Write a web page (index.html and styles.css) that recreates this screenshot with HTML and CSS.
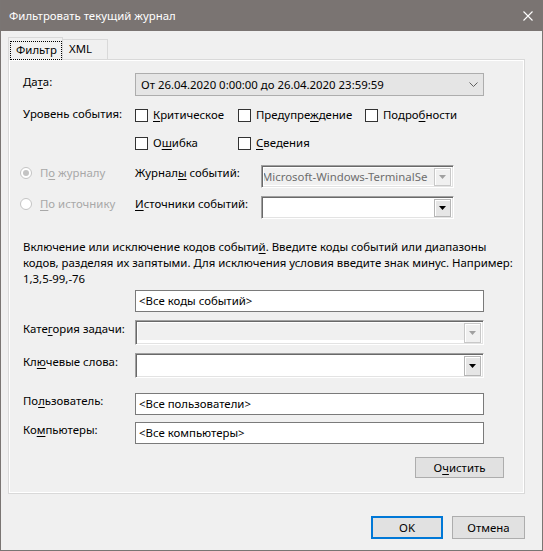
FILE: index.html
```html
<!DOCTYPE html>
<html lang="ru">
<head>
<meta charset="utf-8">
<title>Фильтровать текущий журнал</title>
<link rel="stylesheet" href="styles.css">
</head>
<body>
<div class="window">
  <div class="titlebar">
    <span class="title">Фильтровать текущий журнал</span>
    <svg class="close" width="10" height="10" viewBox="0 0 10 10"><path d="M0.5 0.5 L9.5 9.5 M9.5 0.5 L0.5 9.5" stroke="#fff" stroke-width="1.1" fill="none"/></svg>
  </div>
  <div class="content">
    <div class="tabs">
      <div class="tab tab-active"><span class="focus">Фильтр</span></div>
      <div class="tab tab-plain">XML</div>
    </div>
    <div class="panel">
      <div class="row row-date">
        <div class="label">Да<u>т</u>а:</div>
        <div class="datecombo">
          <span>От 26.04.2020 0:00:00 до 26.04.2020 23:59:59</span>
          <svg width="9" height="5" viewBox="0 0 9 5"><path d="M0.5 0.5 L4.5 4.5 L8.5 0.5" stroke="#606060" fill="none"/></svg>
        </div>
      </div>
      <div class="row row-check1">
        <div class="label">Уровень события:</div>
        <div class="check w103"><span class="box"></span><span><u>К</u>ритическое</span></div>
        <div class="check w127"><span class="box"></span><span>Предупре<u>ж</u>дение</span></div>
        <div class="check"><span class="box"></span><span>Подро<u>б</u>ности</span></div>
      </div>
      <div class="row row-check2">
        <div class="label"></div>
        <div class="check w103"><span class="box"></span><span>О<u>ш</u>ибка</span></div>
        <div class="check"><span class="box"></span><span><u>С</u>ведения</span></div>
      </div>
      <div class="row row-radio1">
        <div class="radio"><span class="circle checked"></span><span>П<u>о</u> журналу</span></div>
        <div class="label2">Журнал<u>ы</u> событий:</div>
        <div class="combo3d small disabled">
          <div class="field"><span class="clip">Microsoft-Windows-TerminalSe</span></div>
          <div class="ddbtn"><svg width="7" height="4" viewBox="0 0 7 4"><path d="M0 0 H7 L3.5 4 Z" fill="#a0a0a0"/></svg></div>
        </div>
      </div>
      <div class="row row-radio2">
        <div class="radio"><span class="circle"></span><span><u>П</u>о источнику</span></div>
        <div class="label2"><u>И</u>сточники событий:</div>
        <div class="combo3d small">
          <div class="field"></div>
          <div class="ddbtn"><svg width="7" height="4" viewBox="0 0 7 4"><path d="M0 0 H7 L3.5 4 Z" fill="#000"/></svg></div>
        </div>
      </div>
      <p class="desc">Включение или исключение кодов событи<u>й</u>. Введите коды событий или диапазоны<br>кодов, разделяя их запятыми. Для исключения условия введите знак минус. Например:<br>1,3,5-99,-76</p>
      <div class="row row-codes">
        <div class="label"></div>
        <div class="input">&lt;Все коды событий&gt;</div>
      </div>
      <div class="row row-cat">
        <div class="label">Кате<u>г</u>ория задачи:</div>
        <div class="combo3d wide disabled">
          <div class="field"></div>
          <div class="ddbtn"><svg width="7" height="4" viewBox="0 0 7 4"><path d="M0 0 H7 L3.5 4 Z" fill="#a0a0a0"/></svg></div>
        </div>
      </div>
      <div class="row row-kw">
        <div class="label">Кл<u>ю</u>чевые слова:</div>
        <div class="combo3d wide">
          <div class="field"></div>
          <div class="ddbtn"><svg width="7" height="4" viewBox="0 0 7 4"><path d="M0 0 H7 L3.5 4 Z" fill="#000"/></svg></div>
        </div>
      </div>
      <div class="row row-user">
        <div class="label">По<u>л</u>ьзователь:</div>
        <div class="input">&lt;Все пользователи&gt;</div>
      </div>
      <div class="row row-comp">
        <div class="label">Ко<u>м</u>пьютеры:</div>
        <div class="input">&lt;Все компьютеры&gt;</div>
      </div>
      <div class="btn btn-clear"><span>О<u>ч</u>истить</span></div>
    </div>
    <div class="footer">
      <div class="btn btn-ok">OK</div>
      <div class="btn btn-cancel">Отмена</div>
    </div>
  </div>
</div>
</body>
</html>
```

FILE: styles.css
```css
* { box-sizing: border-box; }
html, body { margin: 0; padding: 0; }
body {
  font-family: "Noto Sans", "Open Sans", sans-serif;
  font-size: 11.4px;
  color: #000;
  background: #f0f0f0;
}
u { text-decoration: underline; text-underline-offset: 2px; text-decoration-thickness: 1px; }

.window {
  width: 543px;
  height: 551px;
  border: 1px solid #7a7573;
  border-top: 0;
  background: #f0f0f0;
  display: flex;
  flex-direction: column;
}
.titlebar {
  flex: none;
  height: 31px;
  background: #7a7472;
  color: #fff;
  display: flex;
  align-items: center;
  justify-content: space-between;
  padding: 0 9px 1px 8px;
}
.close { display: block; margin-top: 1px; }

.content {
  display: flex;
  flex-direction: column;
  padding: 6px 16px 0 7px;
}
.tabs {
  height: 22px;
  display: flex;
  align-items: flex-end;
}
.tab {
  border: 1px solid #d9d9d9;
  border-bottom: 0;
  background: #f0f0f0;
}
.tab-active {
  width: 55px;
  height: 23px;
  margin-bottom: -1px;
  position: relative;
  z-index: 1;
  padding: 3px 0 0 1px;
}
.focus {
  display: block;
  height: 19px;
  border: 1px dotted #000;
  padding-left: 5px;
  line-height: 16px;
}
.tab-plain {
  width: 45px;
  height: 20px;
  border-left: 0;
  padding-left: 6px;
  line-height: 18px;
}
.panel {
  width: 517px;
  height: 435px;
  border: 1px solid #d9d9d9;
  box-shadow: inset 0 0 0 1px #fff;
  padding: 13px 0 0 14px;
  display: flex;
  flex-direction: column;
}
.row { display: flex; align-items: flex-start; }
.label { width: 112px; flex: none; padding-top: 1px; line-height: 16px; }

.row-date { height: 23px; }
.datecombo {
  width: 349px;
  height: 23px;
  background: #e5e5e5;
  border: 1px solid #adadad;
  display: flex;
  align-items: center;
  justify-content: space-between;
  padding: 0 5px 0 5px;
  line-height: 16px;
}
.datecombo svg { display: block; }

.row-check1 { margin-top: 9px; height: 20px; align-items: center; }
.row-check2 { margin-top: 8px; height: 20px; align-items: center; }
.row-check1 .label, .row-check2 .label { padding-top: 0; margin-top: -2px; }
.check { display: flex; align-items: center; flex: none; line-height: 16px; }
.w103 { width: 103px; }
.w127 { width: 127px; }
.box {
  width: 13px;
  height: 13px;
  border: 1px solid #333;
  background: #fff;
  margin-right: 5px;
  flex: none;
}

.row-radio1 { margin-top: 12px; height: 23px; }
.row-radio2 { margin-top: 8px; height: 23px; }
.radio {
  width: 115px;
  margin-left: -3px;
  display: flex;
  align-items: center;
  color: #a8a8a8;
  height: 16px;
  line-height: 16px;
  flex: none;
}
.circle {
  width: 12px;
  height: 12px;
  border-radius: 50%;
  border: 1px solid #c4c4c4;
  background: #fff;
  margin-right: 8px;
  flex: none;
  display: flex;
  align-items: center;
  justify-content: center;
}
.circle.checked::after {
  content: "";
  width: 6px;
  height: 6px;
  border-radius: 50%;
  background: #c4c4c4;
}
.label2 { width: 126px; flex: none; line-height: 16px; }

.combo3d {
  display: flex;
  border-style: solid;
  border-width: 1px;
  border-color: #a0a0a0 #fff #fff #a0a0a0;
  box-shadow: inset 1px 1px 0 #696969, inset -1px -1px 0 #e3e3e3;
  padding: 2px 2px 1px 2px;
  background: #fff;
}
.combo3d.small { width: 193px; height: 23px; }
.combo3d.wide { width: 349px; height: 25px; }
.field {
  flex: 1;
  overflow: hidden;
  white-space: nowrap;
  line-height: 17px;
  color: #6d6d6d;
}
.disabled .field { background: linear-gradient(#f0f0f0 0 17px, #fff 17px); }
.clip { display: block; margin-left: -2px; }
.ddbtn {
  width: 17px;
  flex: none;
  border: 1px solid #b5b5b5;
  background: #e6e6e6;
  box-shadow: inset 1px 1px 0 #fff;
  display: flex;
  align-items: center;
  justify-content: center;
}
.ddbtn svg { display: block; }
.disabled .ddbtn { background: #f0f0f0; border-color: #c8c8c8; }

.desc {
  margin: 20px 0 0 0;
  line-height: 16px;
  white-space: nowrap;
}
.row-codes { margin-top: 3px; }
.input {
  width: 349px;
  height: 22px;
  border: 1px solid #7a7a7a;
  background: #fff;
  padding-left: 3px;
  line-height: 20px;
}
.row-cat { margin-top: 8px; }
.row-kw { margin-top: 8px; }
.row-user { margin-top: 15px; }
.row-comp { margin-top: 7px; }
.row-user .label, .row-comp .label { padding-top: 0; }

.btn {
  height: 21px;
  background: #e1e1e1;
  border: 1px solid #adadad;
  display: flex;
  align-items: center;
  justify-content: center;
  line-height: 16px;
}
.btn-clear {
  width: 89px;
  margin: 13px 0 0 392px;
}
.footer {
  margin-top: 22px;
  display: flex;
  justify-content: flex-end;
  gap: 9px;
  padding-right: 1px;
}
.btn-ok { width: 72px; height: 23px; border: 2px solid #0078d7; }
.btn-cancel { width: 73px; height: 23px; }
```
